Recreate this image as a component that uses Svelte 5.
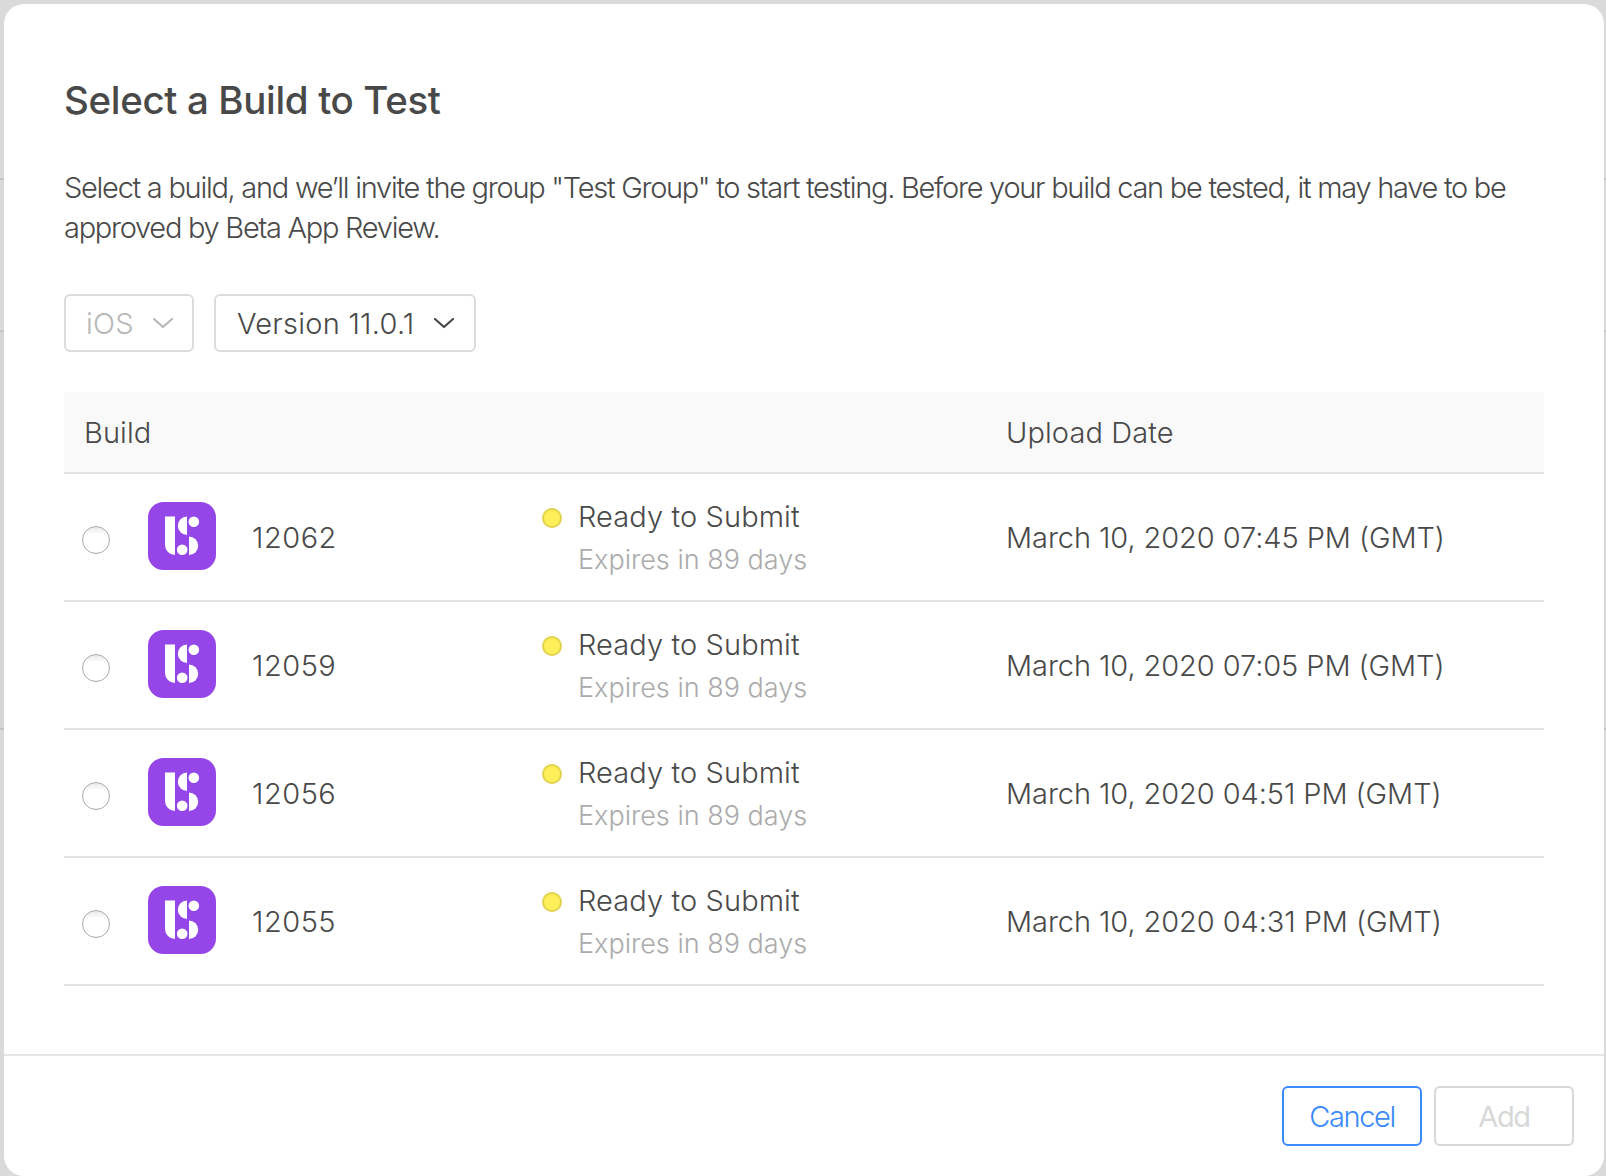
<script>
  const builds = [
    { number: '12062', date: 'March 10, 2020 07:45 PM (GMT)' },
    { number: '12059', date: 'March 10, 2020 07:05 PM (GMT)' },
    { number: '12056', date: 'March 10, 2020 04:51 PM (GMT)' },
    { number: '12055', date: 'March 10, 2020 04:31 PM (GMT)' }
  ];
</script>

{#snippet chevron()}
  <svg class="chevron" viewBox="0 0 20 11" fill="none" stroke="currentColor" stroke-width="2.2">
    <path d="M1 1 L10 9 L19 1" stroke-linejoin="round" stroke-linecap="round" />
  </svg>
{/snippet}

<div class="page">
  <div class="modal" role="dialog">
    <div class="content">
      <h1>Select a Build to Test</h1>
      <p class="intro">
        <span>Select a build, and we’ll invite the group "Test Group" to start testing. Before your build can be tested, it may have to be</span>
        <span>approved by Beta App Review.</span>
      </p>
      <div class="filters">
        <button class="select ios" disabled><span>iOS</span>{@render chevron()}</button>
        <button class="select version"><span>Version 11.0.1</span>{@render chevron()}</button>
      </div>
      <div class="table">
        <div class="row head">
          <div class="th-build">Build</div>
          <div>Upload Date</div>
        </div>
        {#each builds as b}
          <div class="row">
            <span class="radio"></span>
            <svg class="app" viewBox="0 0 68 68">
              <rect width="68" height="68" rx="15.5" fill="#9446e8" />
              <g fill="#fff">
                <path d="M17 14.5h10v38.5a10 10 0 0 1-10-10z" />
                <path d="M39 14.5v18.4a9.2 9.2 0 0 1 0-18.4z" />
                <circle cx="45.8" cy="19.8" r="5.3" />
                <path d="M41 34.6a9.2 9.2 0 0 1 0 18.4z" />
                <circle cx="34.2" cy="47.8" r="5.3" />
              </g>
            </svg>
            <span class="number">{b.number}</span>
            <span class="dot"></span>
            <div class="status">
              <div class="ready">Ready to Submit</div>
              <div class="expires">Expires in 89 days</div>
            </div>
            <span class="date">{b.date}</span>
          </div>
        {/each}
      </div>
    </div>
    <div class="footer">
      <button class="btn cancel">Cancel</button>
      <button class="btn add" disabled>Add</button>
    </div>
  </div>
</div>

<style>
  :global(body) {
    margin: 0;
    background: #d9d9d9;
  }
  .page {
    box-sizing: border-box;
    width: 1606px;
    height: 1176px;
    padding: 4px 2px 0 4px;
    overflow: hidden;
    background:
      linear-gradient(#c4c4c4, #c4c4c4) 0 178px / 100% 2px no-repeat,
      linear-gradient(#c4c4c4, #c4c4c4) 0 330px / 100% 2px no-repeat,
      linear-gradient(#c4c4c4, #c4c4c4) 0 728px / 100% 2px no-repeat,
      linear-gradient(#d5d5d5, #d5d5d5) 0 332px / 100% 396px no-repeat,
      #dadada;
    font-family: Inter, 'Liberation Sans', sans-serif;
    font-weight: 300;
    font-size: 29px;
    color: #494949;
    white-space: nowrap;
  }
  .modal {
    height: 1172px;
    display: flex;
    flex-direction: column;
    background: #fff;
    border-radius: 20px;
  }
  .content {
    height: 1050px;
    flex-shrink: 0;
    box-sizing: border-box;
    padding: 72px 60px 0;
  }
  h1 {
    margin: 0;
    font-size: 38.5px;
    line-height: 48px;
    font-weight: 550;
    letter-spacing: -0.35px;
  }
  .intro {
    margin: 44px 0 0;
    display: flex;
    flex-direction: column;
    line-height: 40px;
    letter-spacing: -1.27px;
  }
  .filters {
    display: flex;
    gap: 20px;
    margin-top: 46px;
  }
  button {
    font: inherit;
    background: #fff;
    box-sizing: border-box;
  }
  .select {
    height: 58px;
    display: flex;
    align-items: center;
    justify-content: space-between;
    padding: 0 19px 0 20px;
    border: 2px solid #dcdcdc;
    border-radius: 6px;
    color: #494949;
    letter-spacing: 0.25px;
  }
  .ios {
    width: 130px;
    color: #b7b7b7;
  }
  .version {
    width: 262px;
    padding: 0 20px 0 21px;
  }
  .chevron {
    width: 20px;
    height: 11px;
  }
  .table {
    margin-top: 40px;
  }
  .row {
    display: grid;
    grid-template-columns: 66px 104px 290px 36px 428px 1fr;
    align-items: center;
    height: 126px;
    padding-left: 18px;
    border-bottom: 2px solid #e3e3e3;
  }
  .head {
    height: 80px;
    background: #f9f9f9;
    letter-spacing: 0.1px;
  }
  .th-build {
    grid-column: 1 / 6;
    padding-left: 2px;
  }
  .radio {
    width: 28px;
    height: 28px;
    box-sizing: border-box;
    margin-top: 6px;
    border: 1.5px solid #a8a8a8;
    border-radius: 50%;
    background: linear-gradient(#ebebeb, #fff 30%);
  }
  .app {
    width: 68px;
    height: 68px;
    margin-top: -2px;
  }
  .number {
    letter-spacing: 0.5px;
  }
  .date {
    letter-spacing: -0.08px;
  }
  .dot {
    width: 20px;
    height: 20px;
    box-sizing: border-box;
    margin-bottom: 38px;
    border: 2px solid #e3d34c;
    border-radius: 50%;
    background: #fdee5a;
  }
  .status {
    padding-top: 4px;
  }
  .ready {
    line-height: 42px;
    letter-spacing: 0.1px;
  }
  .expires {
    line-height: 44px;
    font-size: 27px;
    color: #ababab;
  }
  .footer {
    height: 122px;
    box-sizing: border-box;
    display: flex;
    justify-content: flex-end;
    gap: 12px;
    padding: 30px 30px 0;
    border-top: 2px solid #e6e6e6;
  }
  .btn {
    width: 140px;
    height: 60px;
    padding: 0;
    border-radius: 6px;
    letter-spacing: -1.4px;
  }
  .cancel {
    color: #3a8afa;
    border: 2px solid #3a8afa;
  }
  .add {
    color: #d8d8d8;
    border: 2px solid #d8d8d8;
    font-weight: 400;
  }
</style>
